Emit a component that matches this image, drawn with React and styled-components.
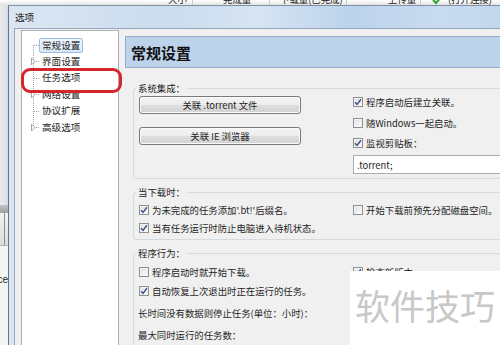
import React from "react";
import styled, { createGlobalStyle } from "styled-components";

const FONT = `"Noto Sans CJK SC", "Noto Sans", "Liberation Sans", sans-serif`;

const GlobalStyle = createGlobalStyle`
  html, body {
    margin: 0;
    padding: 0;
  }
  body {
    font-family: ${FONT};
    background: #ffffff;
  }
  * {
    box-sizing: border-box;
  }
`;

/* 전체 화면 */
const Screen = styled.div`
  position: relative;
  width: 500px;
  height: 345px;
  overflow: hidden;
  display: grid;
  grid-template-columns: 8px 620px;
  grid-template-rows: 5px 340px;
  background: #e6e8eb;
  font-family: ${FONT};
  color: #1e1e1e;
`;

/* 뒤쪽 창의 목록 헤더 (위쪽 5px만 보임) */
const BackHeader = styled.div`
  grid-column: 1 / -1;
  display: flex;
  overflow: hidden;
  background: linear-gradient(#ffffff, #e4e4e4);
`;

const BackCell = styled.div`
  flex: 0 0 ${(p) => p.w}px;
  display: flex;
  align-items: flex-end;
  gap: 6px;
  padding-left: ${(p) => p.pl}px;
  border-right: 1px solid #c9c9c9;
  font-size: 9.4px;
  line-height: 12px;
  margin-top: -7px;
  height: 12px;
  white-space: nowrap;
  color: #222;
`;

/* 뒤쪽 창의 왼쪽 가장자리 */
const LeftStrip = styled.div`
  display: flex;
  flex-direction: column;
  overflow: hidden;
`;

const StripPane = styled.div`
  flex: 0 0 200px;
  background: linear-gradient(90deg, #e9eaec 0%, #dfe3e8 70%, #cdd9e6 100%);
`;

const StripBand = styled.div`
  flex: 0 0 8px;
  background: linear-gradient(#c4c4c4, #9e9e9e);
`;

const StripHead = styled.div`
  flex: 0 0 33px;
  display: flex;
  background: linear-gradient(#f2f2f2, #dcdcdc);
  border-bottom: 1px solid #b4b4b4;
  div {
    width: 5px;
    border-right: 1px solid #8d8d8d;
  }
`;

const StripText = styled.div`
  flex: 1;
  display: flex;
  justify-content: flex-end;
  padding-top: 28px;
  background: #f4f4f4;
  font-family: "Liberation Sans", sans-serif;
  font-size: 10px;
  line-height: 12px;
`;

/* 옵션 대화상자 */
const Dialog = styled.div`
  display: flex;
  flex-direction: column;
  min-height: 0;
  padding: 0 0 0 5px;
  border-left: 1px solid #66788e;
  border-top: 1px solid #7d90a6;
  background: linear-gradient(
    90deg,
    #dbe6f2 0%,
    #cbdcee 25%,
    #d6e4f3 40%,
    #bcd3ec 55%,
    #c8dbf0 70%,
    #b6cfea 100%
  );
`;

const TitleBar = styled.div`
  flex: 0 0 22px;
  display: flex;
  align-items: center;
  padding-left: 1px;
  font-size: 9.6px;
  color: #1a1a1a;
`;

const Client = styled.div`
  flex: 1 0 auto;
  display: flex;
  gap: 6px;
  padding: 1px 0 0 6px;
  background: #f0f0f0;
  border-top: 1px solid #98a7b8;
  border-left: 1px solid #98a7b8;
`;

/* 왼쪽 트리 */
const Tree = styled.div`
  flex: 0 0 98px;
  background: #ffffff;
  border: 1px solid #a9b0b8;
  padding-top: 6px;
`;

const TreeRow = styled.div`
  height: 16.4px;
  display: flex;
  align-items: center;
  svg {
    flex: 0 0 17px;
  }
`;

const TreeLabel = styled.span`
  height: 15px;
  line-height: 13px;
  padding: 0 2px;
  font-size: 9.6px;
  white-space: nowrap;
  border: 1px solid ${(p) => (p.selected ? "#9dbde3" : "transparent")};
  border-radius: 2px;
  background: ${(p) =>
    p.selected ? "linear-gradient(#eef5fd, #d9e8f8)" : "transparent"};
`;

/* 오른쪽 설정 패널 */
const Panel = styled.div`
  flex: 1;
  display: flex;
  flex-direction: column;
  margin-top: 6px;
`;

const PanelTitle = styled.div`
  flex: 0 0 32px;
  display: flex;
  align-items: center;
  padding-left: 5px;
  background: #bdd3eb;
  border: 1px solid #93aecd;
  font-size: 15px;
  font-weight: bold;
  color: #111;
`;

const PanelBody = styled.div`
  flex: 0 0 auto;
  display: flex;
  flex-direction: column;
  gap: 7px;
  padding: 14px 0 0 8px;
`;

const Group = styled.fieldset`
  flex: 0 0 auto;
  margin: 0;
  min-width: 0;
  border: 1px solid #d3dbe2;
  border-radius: 3px;
  padding: ${(p) => p.pad || "0 0 4px 5px"};

  legend {
    margin-left: -3px;
    padding: 0 2px;
    font-size: 9.4px;
    line-height: 12px;
    color: #222;
  }
`;

const Grid = styled.div`
  display: grid;
  grid-template-columns: 214px 1fr;
  grid-template-rows: ${(p) => p.rows || "auto"};
  row-gap: ${(p) => p.gap || 0}px;
  align-items: start;
  margin-top: ${(p) => p.top || 0}px;
`;

const Stack = styled.div`
  display: grid;
  grid-template-rows: ${(p) => p.rows};
  align-items: start;
  gap: ${(p) => p.gap || 0}px;
`;

const Button = styled.div`
  width: 162px;
  height: 18px;
  display: flex;
  align-items: center;
  justify-content: center;
  border: 1px solid #7a7a7a;
  border-radius: 3px;
  box-shadow: inset 0 0 0 1px #fbfbfb;
  background: linear-gradient(#f4f4f4 0%, #ececec 50%, #dedede 51%, #d2d2d2 100%);
  font-size: 9.4px;
  white-space: nowrap;
`;

const CheckRow = styled.label`
  display: flex;
  align-items: center;
  gap: 3px;
  height: 12px;
  font-size: 9.4px;
  line-height: 12px;
  white-space: nowrap;
  grid-column: ${(p) => p.col || "auto"};
`;

const Box = styled.span`
  flex: 0 0 10px;
  width: 10px;
  height: 10px;
  display: flex;
  align-items: center;
  justify-content: center;
  border: 1px solid #8e8f8f;
  background: linear-gradient(135deg, #dcdcdc, #ffffff);
  box-shadow: inset 0 0 0 1px #f4f4f4;
`;

const Text = styled.div`
  height: 12px;
  margin-left: -1px;
  font-size: 9.4px;
  line-height: 12px;
  white-space: nowrap;
  grid-column: 1 / -1;
`;

const Input = styled.div`
  width: 190px;
  height: 19px;
  display: flex;
  align-items: center;
  padding-left: 3px;
  background: #ffffff;
  border: 1px solid #abadb3;
  font-size: 9.4px;
`;

/* 덮어 놓인 것들 */
const Mark = styled.div`
  position: absolute;
  left: 21px;
  top: 68px;
  width: 101px;
  height: 25px;
  border: 3px solid #d4262b;
  border-radius: 9px;
`;

const Watermark = styled.div`
  position: absolute;
  left: 350px;
  top: 271px;
  width: 150px;
  height: 74px;
  padding: 14px 0 0 5px;
  background: #ffffff;
  font-size: 35px;
  line-height: 40px;
  color: #c8c8c8;
  white-space: nowrap;
`;

function Check({ on, children, col }) {
  return (
    <CheckRow col={col}>
      <Box>
        {on && (
          <svg width="8" height="8" viewBox="0 0 8 8">
            <path
              d="M1 4.2 L3 6.4 L7 1.2"
              fill="none"
              stroke="#3e5486"
              strokeWidth="1.5"
            />
          </svg>
        )}
      </Box>
      {children}
    </CheckRow>
  );
}

const treeItems = [
  { label: "常规设置", selected: true },
  { label: "界面设置", more: true },
  { label: "任务选项" },
  { label: "网络设置", more: true },
  { label: "协议扩展" },
  { label: "高级选项", more: true },
];

function TreeLines({ first, last, more }) {
  return (
    <svg width="17" height="16.4" viewBox="0 0 17 16.4">
      <line
        x1="11.5"
        y1={first ? 8.2 : 0}
        x2="11.5"
        y2={last ? 8.2 : 16.4}
        stroke="#a3a3a3"
        strokeDasharray="1 1"
      />
      <line x1="12" y1="8.5" x2="17" y2="8.5" stroke="#a3a3a3" strokeDasharray="1 1" />
      {more && (
        <path d="M9.5 5 L13 8.5 L9.5 12 Z" fill="#ffffff" stroke="#9a9a9a" strokeWidth="0.9" />
      )}
    </svg>
  );
}

const backCols = [
  { w: 193, pl: 168, t: "大小" },
  { w: 77, pl: 30, t: "完成量" },
  { w: 77, pl: 10, t: "下载量(已完成)" },
  { w: 74, pl: 41, t: "上传量" },
  { w: 120, pl: 11, t: "(打开连接)", icon: true },
];

function App() {
  return (
    <>
      <GlobalStyle />
      <Screen>
        <BackHeader>
          {backCols.map((c) => (
            <BackCell key={c.t} w={c.w} pl={c.pl}>
              {c.icon && (
                <svg width="10" height="10" viewBox="0 0 10 10">
                  <path d="M1 5 L4 8 L9 2" fill="none" stroke="#3aa83a" strokeWidth="2.2" />
                </svg>
              )}
              {c.t}
            </BackCell>
          ))}
        </BackHeader>

        <LeftStrip>
          <StripPane />
          <StripBand />
          <StripHead>
            <div />
          </StripHead>
          <StripText>ice</StripText>
        </LeftStrip>

        <Dialog>
          <TitleBar>选项</TitleBar>
          <Client>
            <Tree>
              {treeItems.map((item, i) => (
                <TreeRow key={item.label}>
                  <TreeLines
                    first={i === 0}
                    last={i === treeItems.length - 1}
                    more={item.more}
                  />
                  <TreeLabel selected={item.selected}>{item.label}</TreeLabel>
                </TreeRow>
              ))}
            </Tree>

            <Panel>
              <PanelTitle>常规设置</PanelTitle>
              <PanelBody>
                <Group>
                  <legend>系统集成：</legend>
                  <Grid top={2}>
                    <Stack rows="18px 18px" gap={13}>
                      <Button>关联 .torrent 文件</Button>
                      <Button>关联 IE 浏览器</Button>
                    </Stack>
                    <Stack rows="21px 20px 18px 19px">
                      <Check on>程序启动后建立关联。</Check>
                      <Check>随Windows一起启动。</Check>
                      <Check on>监视剪贴板：</Check>
                      <Input>.torrent;</Input>
                    </Stack>
                  </Grid>
                </Group>

                <Group pad="0 0 5px 5px">
                  <legend>当下载时：</legend>
                  <Grid top={6} gap={6}>
                    <Check on>为未完成的任务添加'.bt!'后缀名。</Check>
                    <Check>开始下载前预先分配磁盘空间。</Check>
                    <Check on col="1 / -1">
                      当有任务运行时防止电脑进入待机状态。
                    </Check>
                  </Grid>
                </Group>

                <Group pad="0 0 5px 5px">
                  <legend>程序行为：</legend>
                  <Grid top={7} rows="19px 22px 22px 22px">
                    <Check>程序启动时就开始下载。</Check>
                    <Check on>检查新版本</Check>
                    <Check on col="1 / -1">
                      自动恢复上次退出时正在运行的任务。
                    </Check>
                    <Text>长时间没有数据则停止任务(单位：小时)：</Text>
                    <Text>最大同时运行的任务数：</Text>
                  </Grid>
                </Group>
              </PanelBody>
            </Panel>
          </Client>
        </Dialog>

        <Mark />
        <Watermark>软件技巧</Watermark>
      </Screen>
    </>
  );
}

export default App;
